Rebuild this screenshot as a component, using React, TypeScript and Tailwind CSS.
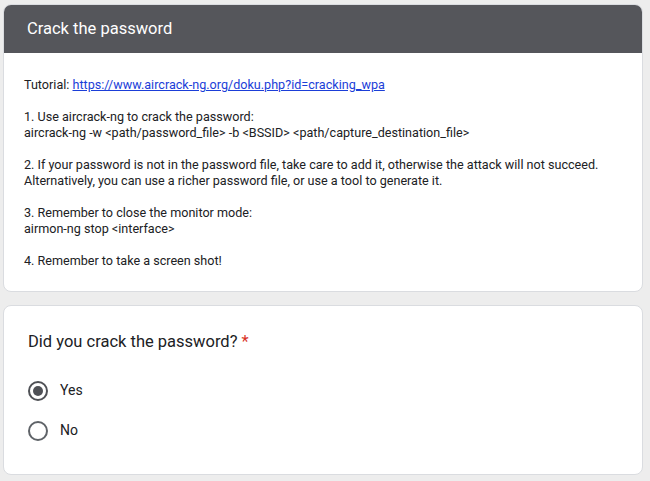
export default function App() {
  return (
    <div className="min-h-[481px] w-[650px] bg-[#ededed] pt-[4px] font-['Roboto',sans-serif]">
      {/* Section card */}
      <div className="ml-[3px] w-[640px] overflow-hidden rounded-[8px] border border-[#dadce0] bg-white">
        <div className="flex h-[48px] items-center bg-[#55565b] px-[23px]">
          <h1 className="text-[16.5px] text-white">Crack the password</h1>
        </div>
        <div className="pb-[22px] pl-[20px] pr-[16px] pt-[24px] text-[12.6px] leading-[16px] text-[#202124]">
          <p>
            Tutorial:{' '}
            <a href="#" className="text-[#1b3ed8] underline">
              https://www.aircrack-ng.org/doku.php?id=cracking_wpa
            </a>
          </p>
          <br />
          <p>1. Use aircrack-ng to crack the password:</p>
          <p>aircrack-ng -w &lt;path/password_file&gt; -b &lt;BSSID&gt; &lt;path/capture_destination_file&gt;</p>
          <br />
          <p>2. If your password is not in the password file, take care to add it, otherwise the attack will not succeed.</p>
          <p>Alternatively, you can use a richer password file, or use a tool to generate it.</p>
          <br />
          <p>3. Remember to close the monitor mode:</p>
          <p>airmon-ng stop &lt;interface&gt;</p>
          <br />
          <p>4. Remember to take a screen shot!</p>
        </div>
      </div>

      {/* Question card */}
      <div className="ml-[3px] mt-[13px] w-[640px] rounded-[8px] border border-[#dadce0] bg-white pb-[33px] pl-[24px] pr-[24px] pt-[24px]">
        <div className="text-[16.5px] leading-[24px] text-[#202124]">
          Did you crack the password? <span className="text-[#d93025]">*</span>
        </div>
        <div className="mt-[26px] flex flex-col gap-[19px]">
          <label className="flex items-center gap-[12px]">
            <span className="flex h-[20px] w-[20px] items-center justify-center rounded-full border-2 border-[#4f5156]">
              <span className="h-[10px] w-[10px] rounded-full bg-[#4f5156]" />
            </span>
            <span className="text-[14px] text-[#202124]">Yes</span>
          </label>
          <label className="flex items-center gap-[12px]">
            <span className="h-[20px] w-[20px] rounded-full border-2 border-[#5f6368]" />
            <span className="text-[14px] text-[#202124]">No</span>
          </label>
        </div>
      </div>
    </div>
  )
}
